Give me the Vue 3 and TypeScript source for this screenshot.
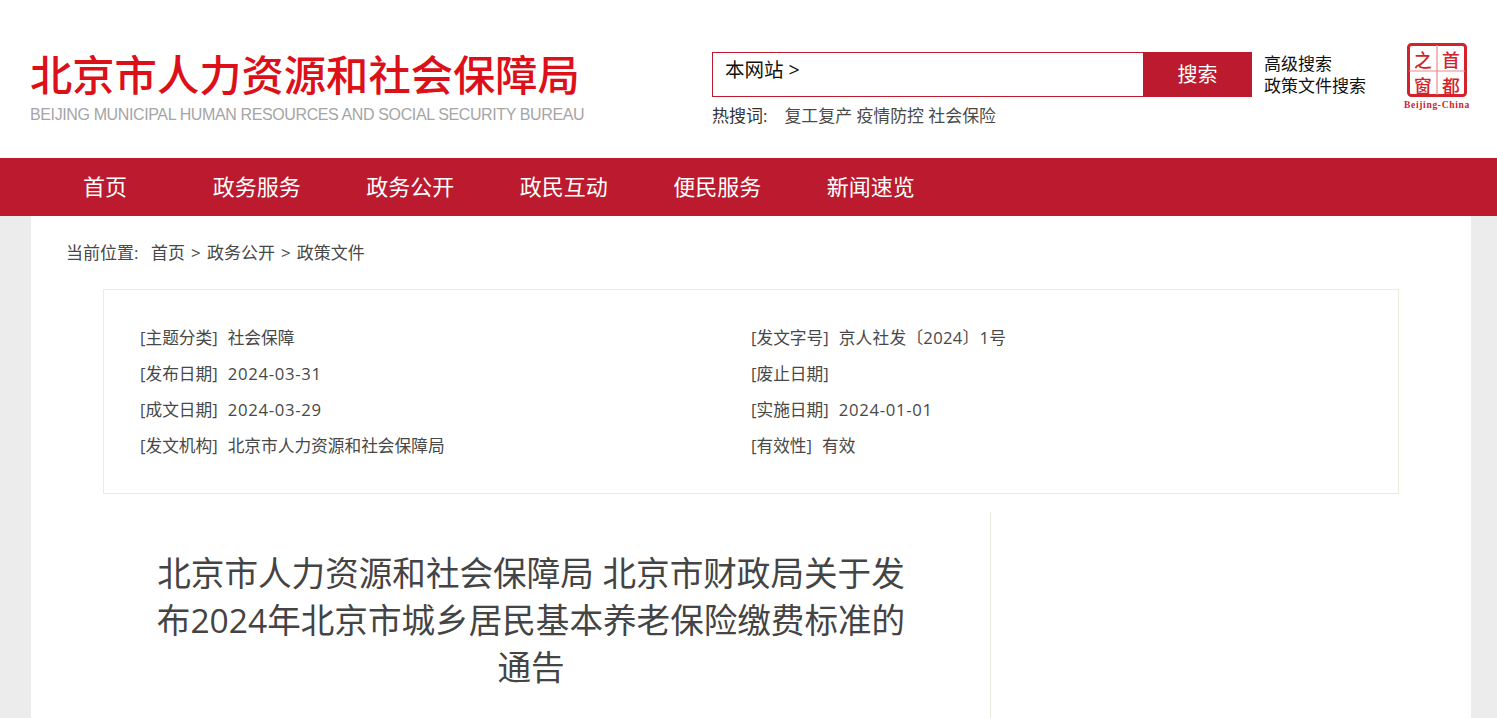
<script setup lang="ts">
const nav: string[] = ['首页', '政务服务', '政务公开', '政民互动', '便民服务', '新闻速览']
const left = [
  ['[主题分类]', '社会保障'],
  ['[发布日期]', '2024-03-31'],
  ['[成文日期]', '2024-03-29'],
  ['[发文机构]', '北京市人力资源和社会保障局'],
]
const right = [
  ['[发文字号]', '京人社发〔2024〕1号'],
  ['[废止日期]', ''],
  ['[实施日期]', '2024-01-01'],
  ['[有效性]', '有效'],
]
const valueClass = (v: string): Record<string, boolean> => ({
  num: /^\d{4}-/.test(v),
  ref: v.includes('〔'),
})
</script>

<template>
  <div class="page">
    <header class="header">
      <div class="brand">
        <div class="brand-cn">北京市人力资源和社会保障局</div>
        <div class="brand-en">BEIJING MUNICIPAL HUMAN RESOURCES AND SOCIAL SECURITY BUREAU</div>
      </div>
      <div class="search-col">
        <div class="search-row">
          <div class="search-box">本网站 &gt;</div>
          <div class="search-btn">搜索</div>
        </div>
        <div class="hot">
          <span class="hot-label">热搜词:</span>
          <span class="hot-items">复工复产 疫情防控 社会保险</span>
        </div>
      </div>
      <div class="adv">
        <div>高级搜索</div>
        <div>政策文件搜索</div>
      </div>
      <div class="seal">
        <svg width="74" height="74" viewBox="0 0 74 74">
          <rect x="8.500" y="6.500" width="57" height="51" rx="3" fill="none" stroke="#d2232a" stroke-width="3" />
          <path d="M37 7V57M9 33H65" stroke="#e98a8d" stroke-width="1.200" fill="none" />
          <text x="23" y="29" class="seal-ch">之</text>
          <text x="51" y="29" class="seal-ch">首</text>
          <text x="23" y="55" class="seal-ch">窗</text>
          <text x="51" y="55" class="seal-ch">都</text>
          <text x="37" y="70" class="seal-en">Beijing-China</text>
        </svg>
      </div>
    </header>

    <nav class="nav">
      <a v-for="item in nav" :key="item" class="nav-item">{{ item }}</a>
    </nav>

    <main class="main">
      <div class="crumbs">当前位置:<span class="crumb-path">首页 &gt; 政务公开 &gt; 政策文件</span></div>
      <section class="meta">
        <div class="meta-col left">
          <div v-for="row in left" :key="row[0]" class="meta-row">
            <span class="meta-key">{{ row[0] }}</span><span :class="valueClass(row[1])">{{ row[1] }}</span>
          </div>
        </div>
        <div class="meta-col">
          <div v-for="row in right" :key="row[0]" class="meta-row">
            <span class="meta-key">{{ row[0] }}</span><span :class="valueClass(row[1])">{{ row[1] }}</span>
          </div>
        </div>
      </section>
      <section class="article">
        <div class="article-main">
          <h1 class="title">北京市人力资源和社会保障局 北京市财政局关于发布2024年北京市城乡居民基本养老保险缴费标准的通告</h1>
        </div>
        <aside class="article-side"></aside>
      </section>
    </main>
  </div>
</template>

<style>
html, body { margin: 0; padding: 0; background: #ececec; overflow: hidden; }
</style>

<style scoped>
.page {
  width: 1497px;
  height: 718px;
  overflow: hidden;
  font-family: "Open Sans", "Noto Sans CJK SC", sans-serif;
  font-weight: 400;
  color: #333;
}
.header {
  height: 158px;
  background: #fff;
  display: flex;
  box-sizing: border-box;
}
.brand { width: 712px; padding: 46px 0 0 30px; box-sizing: border-box; }
.brand-cn {
  font-family: "Noto Sans CJK SC", sans-serif;
  font-size: 42.300px;
  line-height: 54px;
  font-weight: 500;
  color: #dc1018;
  white-space: nowrap;
}
.brand-en {
  font-family: "Liberation Sans", sans-serif;
  font-size: 16px;
  font-weight: 400;
  line-height: 20px;
  margin-top: 5px;
  letter-spacing: -0.380px;
  color: #a5a5a5;
  white-space: nowrap;
}
.search-col { width: 540px; padding-top: 52px; box-sizing: border-box; }
.search-row { display: flex; height: 45px; }
.search-box {
  width: 431px;
  box-sizing: border-box;
  border: 1px solid #bc1a2e;
  border-right: none;
  padding-left: 12px;
  font-size: 19.500px;
  line-height: 33px;
  color: #111;
}
.search-btn {
  width: 109px;
  background: #bc1a2e;
  color: #fff;
  font-size: 20px;
  line-height: 46px;
  text-align: center;
}
.hot { margin-top: 7px; font-size: 17px; line-height: 24px; color: #333; white-space: nowrap; }
.hot-label { margin-right: 17px; }
.hot-items { color: #4a4a4a; font-size: 16.900px; }
.adv {
  margin-left: 12px;
  padding-top: 53px;
  font-size: 17px;
  line-height: 22px;
  color: #111;
  width: 128px;
  white-space: nowrap;
}
.seal { padding-top: 38px; margin-left: 8px; }
.seal-ch { font-size: 17.800px; fill: #d2232a; text-anchor: middle; font-family: "Noto Sans CJK SC", sans-serif; font-weight: 500; }
.seal-en { font-size: 9.500px; font-weight: 700; fill: #d2232a; text-anchor: middle; font-family: "Liberation Serif", serif; letter-spacing: 0.700px; }
.nav {
  height: 58px;
  background: #bc1a2e;
  display: flex;
  padding-left: 30px;
}
.nav-item {
  width: 153.500px;
  text-align: center;
  color: #fff;
  font-size: 22px;
  line-height: 56px;
  font-weight: 400;
  box-sizing: border-box;
  white-space: nowrap;
}
.nav-item:first-child { width: 150px; }
.main {
  margin: 0 26px 0 31px;
  background: #fff;
  height: 502px;
  box-sizing: border-box;
  padding-top: 24px;
}
.crumbs { margin-left: 35px; font-size: 17px; line-height: 26px; color: #484848; white-space: nowrap; }
.crumb-path { margin-left: 12.500px; word-spacing: 1.700px; }
.meta {
  margin: 23px 72px 0 72px;
  height: 205px;
  box-sizing: border-box;
  border: 1px solid #ecece2;
  display: flex;
  padding: 30px 0 0 36px;
}
.meta-col { font-size: 16.700px; line-height: 36px; color: #484848; }
.meta-col.left { width: 611px; }
.meta-row { height: 36px; white-space: nowrap; }
.meta-key { margin-right: 10px; }
.num { letter-spacing: 0.700px; }
.ref { letter-spacing: 0.250px; }
.article { display: flex; margin-top: 18px; height: 206px; }
.article-main { width: 960px; box-sizing: border-box; border-right: 1px solid #ecece2; padding: 38px 78px 0 119px; }
.title {
  margin: 0;
  font-size: 33.600px;
  line-height: 47px;
  font-weight: 400;
  text-align: center;
  color: #444;
}
</style>
